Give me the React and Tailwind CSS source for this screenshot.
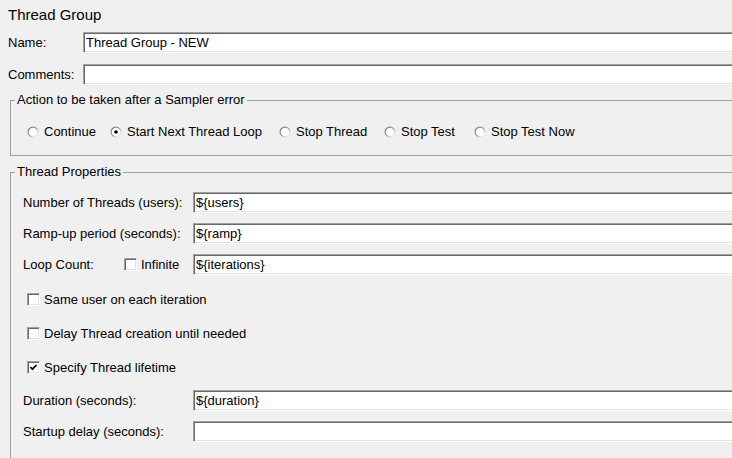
import React from 'react';

const sunken =
  'border border-t-[#a0a0a0] border-l-[#a0a0a0] border-r-white border-b-white shadow-[inset_1px_1px_0_#696969,inset_-1px_-1px_0_#e3e3e3]';

const TextField = ({ value, className = '' }) => (
  <input
    readOnly
    value={value}
    className={`shrink-0 h-[21px] bg-white pl-[2px] text-[13px] text-black outline-none ${sunken} ${className}`}
  />
);

const CheckBox = ({ checked, label }) => (
  <div className="flex items-center gap-[4px]">
    <div className={`h-[13px] w-[13px] bg-white flex items-center justify-center ${sunken}`}>
      {checked && (
        <svg width="9" height="9" viewBox="0 0 9 9">
          <polyline points="1.5,4 3.5,6.2 7.5,2" fill="none" stroke="#000" strokeWidth="1.7" />
        </svg>
      )}
    </div>
    {label && <span>{label}</span>}
  </div>
);

const Radio = ({ checked, label, width }) => (
  <div className="flex items-center gap-[5px] shrink-0" style={{ width }}>
    <svg width="12" height="12" viewBox="0 0 12 12">
      <defs>
        <linearGradient id="radioEdge" x1="0" y1="0" x2="1" y2="1">
          <stop offset="0" stopColor="#696969" />
          <stop offset="0.5" stopColor="#a0a0a0" />
          <stop offset="0.75" stopColor="#e3e3e3" />
          <stop offset="1" stopColor="#ffffff" />
        </linearGradient>
      </defs>
      <circle cx="6" cy="6" r="5.5" fill="url(#radioEdge)" />
      <circle cx="6" cy="6" r="4.3" fill="#fff" />
      {checked && <circle cx="6" cy="6" r="1.8" fill="#000" />}
    </svg>
    <span>{label}</span>
  </div>
);

const Group = ({ title, children, className = '' }) => (
  <fieldset className={`ml-[10px] w-[740px] border border-[#a0a0a0] ${className}`}>
    <legend className="ml-[4px] px-[2px] leading-[16px]">{title}</legend>
    {children}
  </fieldset>
);

const PropRow = ({ label, value, className = '' }) => (
  <div className={`h-[21px] flex items-center ${className}`}>
    <span className="w-[170px] shrink-0">{label}</span>
    <TextField value={value} className="w-[560px]" />
  </div>
);

const errorActions = [
  { label: 'Continue', width: 83 },
  { label: 'Start Next Thread Loop', width: 169, checked: true },
  { label: 'Stop Thread', width: 105 },
  { label: 'Stop Test', width: 90 },
  { label: 'Stop Test Now', width: 120 },
];

export default function App() {
  return (
    <div className="w-[732px] h-[458px] overflow-hidden bg-[#f0f0f0] text-[13px] text-black font-['Liberation_Sans',Arial,sans-serif]">
      <div className="h-[30px] flex items-center pl-[8px] text-[15px]">Thread Group</div>

      <div className="mt-[2px] h-[21px] flex items-center">
        <span className="w-[83px] shrink-0 pl-[8px]">Name:</span>
        <TextField value="Thread Group - NEW" className="w-[660px]" />
      </div>
      <div className="mt-[11px] h-[21px] flex items-center">
        <span className="w-[83px] shrink-0 pl-[8px]">Comments:</span>
        <TextField value="" className="w-[660px]" />
      </div>

      {/* Sampler error */}
      <Group title="Action to be taken after a Sampler error" className="mt-[7px]">
        <div className="pt-[16px] pb-[15px] pl-[16px] h-[47px] flex items-center">
          {errorActions.map((a) => (
            <Radio key={a.label} {...a} />
          ))}
        </div>
      </Group>

      {/* Thread properties */}
      <Group title="Thread Properties" className="mt-[8px] h-[320px]">
        <div className="pt-[12px] pl-[12px] flex flex-col">
          <PropRow label="Number of Threads (users):" value="${users}" />
          <PropRow label="Ramp-up period (seconds):" value="${ramp}" className="mt-[10px]" />
          <div className="mt-[10px] h-[21px] flex items-center">
            <div className="w-[170px] shrink-0 flex items-center">
              <span className="w-[101px]">Loop Count:</span>
              <CheckBox label="Infinite" />
            </div>
            <TextField value="${iterations}" className="w-[560px]" />
          </div>
          <div className="mt-[14px] h-[21px] flex items-center pl-[4px]">
            <CheckBox label="Same user on each iteration" />
          </div>
          <div className="mt-[13px] h-[21px] flex items-center pl-[4px]">
            <CheckBox label="Delay Thread creation until needed" />
          </div>
          <div className="mt-[13px] h-[21px] flex items-center pl-[4px]">
            <CheckBox checked label="Specify Thread lifetime" />
          </div>
          <PropRow label="Duration (seconds):" value="${duration}" className="mt-[12px]" />
          <PropRow label="Startup delay (seconds):" value="" className="mt-[10px]" />
        </div>
      </Group>
    </div>
  );
}
